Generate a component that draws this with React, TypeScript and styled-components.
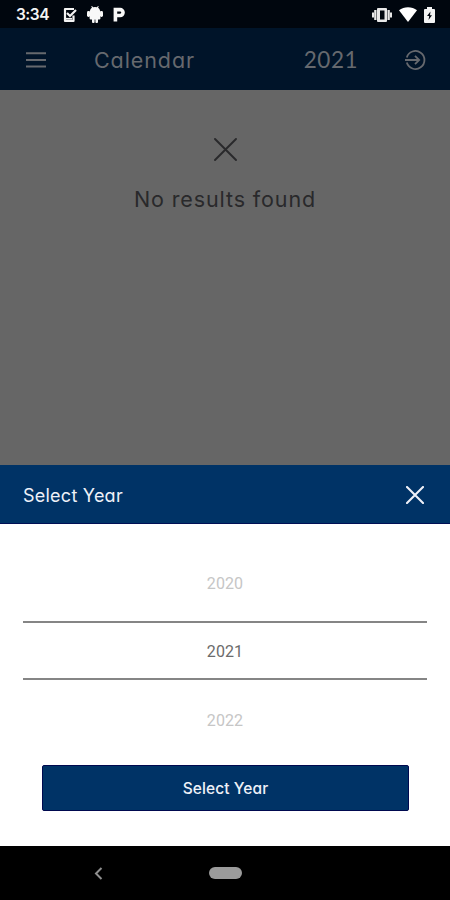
import React from "react";
import styled, { createGlobalStyle } from "styled-components";

const Global = createGlobalStyle`
  * { box-sizing: border-box; }
  body { margin: 0; background: #000; }
`;

const Screen = styled.main`
  width: 450px;
  height: 900px;
  display: flex;
  flex-direction: column;
  overflow: hidden;
  background: #666;
  font-family: Inter, "Liberation Sans", sans-serif;
  font-feature-settings: "cv11" 1;
`;

const StatusBar = styled.div`
  height: 28px;
  flex: none;
  display: flex;
  align-items: center;
  justify-content: space-between;
  padding: 1px 15px 0 16px;
  background: #00060e;
`;

const StatusGroup = styled.div<{ $gap: number }>`
  display: flex;
  align-items: center;
  gap: ${(p) => p.$gap}px;
`;

const Clock = styled.span`
  width: 37px;
  font: 600 15.5px/27px Inter, sans-serif;
  letter-spacing: -0.5px;
  white-space: nowrap;
  color: #f4f4f4;
`;

const Icon = styled.svg`
  display: block;
  flex: none;
`;

const AppBar = styled.header`
  height: 62px;
  flex: none;
  display: flex;
  align-items: center;
  padding: 1px 24px 0 26px;
  background: #001429;
  color: #66696e;
`;

const BarTitle = styled.h1`
  margin: 0 auto 0 48px;
  font-size: 21.5px;
  line-height: 30px;
  font-weight: 400;
  letter-spacing: 0.9px;
`;

const BarYear = styled.span`
  margin-right: 47px;
  font: 400 22.5px/30px Lato, sans-serif;
  letter-spacing: 0.5px;
`;

const Results = styled.section`
  flex: 1;
  display: flex;
  flex-direction: column;
  align-items: center;
  padding-top: 48px;
  color: #29292b;
`;

const EmptyText = styled.p`
  margin: 22px 0 0;
  font-size: 21.5px;
  line-height: 32px;
  font-weight: 400;
  letter-spacing: 0.88px;
`;

const Sheet = styled.section`
  height: 381px;
  flex: none;
  display: flex;
  flex-direction: column;
  background: #fff;
`;

const SheetHeader = styled.div`
  height: 59px;
  flex: none;
  display: flex;
  align-items: center;
  justify-content: space-between;
  padding: 2px 26px 0 23px;
  background: #003366;
  border-bottom: 1px solid #000f55;
  color: #eef1f8;
`;

const SheetTitle = styled.h2`
  margin: 0;
  padding-top: 2px;
  font-size: 18px;
  line-height: 26px;
  font-weight: 400;
  letter-spacing: 0.24px;
`;

const Picker = styled.div`
  margin: 31px 23px 0;
  display: flex;
  flex-direction: column;
`;

const Year = styled.div<{ $selected?: boolean }>`
  height: ${(p) => (p.$selected ? 59 : 66)}px;
  padding-top: ${(p) => (p.$selected ? 3 : 0)}px;
  display: flex;
  align-items: center;
  justify-content: center;
  font: 400 16px/20px Roboto, sans-serif;
  letter-spacing: 0.1px;
  color: ${(p) => (p.$selected ? "#6b6b6b" : "#c6c6c6")};
  border: solid #858585;
  border-width: ${(p) => (p.$selected ? "2px 0" : "0")};
  &:first-child { padding-bottom: 8px; }
  &:last-child { padding-top: 16px; }
`;

const Submit = styled.button`
  height: 46px;
  margin: 19px 41px 0 42px;
  padding: 2px 0 0;
  border: 1px solid #00094f;
  border-radius: 2px;
  background: #003366;
  color: #eef1f8;
  font: 500 15.5px/20px Inter, sans-serif;
  letter-spacing: 0.1px;
  font-feature-settings: "cv11" 1;
`;

const NavBar = styled.nav`
  height: 54px;
  flex: none;
  display: flex;
  align-items: center;
  padding-left: 93px;
  background: #000;
`;

const HomePill = styled.div`
  width: 33px;
  height: 12px;
  margin-left: 106px;
  border-radius: 6px;
  background: #9b9b9b;
`;

function Cross({ size, stroke }: { size: number; stroke: number }) {
  const far = size - 1;
  return (
    <Icon width={size} height={size} fill="none" stroke="currentColor" strokeWidth={stroke} strokeLinecap="round">
      <path d={`M1 1L${far} ${far}M${far} 1L1 ${far}`} />
    </Icon>
  );
}

export default function App() {
  return (
    <>
      <Global />
      <Screen>
        <StatusBar>
          <StatusGroup $gap={10}>
            <Clock>3:34</Clock>
            <Icon width="14" height="16" viewBox="0 0 14 16" fill="none" stroke="#f4f4f4" strokeWidth="2.2">
              <path d="M11 2H2v12h8.5V8.5" strokeLinejoin="round" />
              <path d="M4 6l3 3 6-6" />
              <path d="M3 11.8h6" strokeWidth="1.8" />
            </Icon>
            <Icon width="16" height="17" viewBox="0 0 16 17" fill="#f8f8f8">
              <path d="M3 5C3 3.5 4 2.4 5 1.8L4.2.6 5 .1l1.1 1.2a6 6 0 0 1 3.8 0L11 .1l.8.5L11 1.8c1.1.6 2 1.7 2 3.2z" />
              <rect x="2.6" y="4.5" width="10.8" height="9" rx="1" />
              <rect x="0" y="5" width="3" height="6" rx="1.4" />
              <rect x="13" y="5" width="3" height="6" rx="1.4" />
              <rect x="5" y="12" width="2.6" height="5" rx="1" />
              <rect x="8.4" y="12" width="2.6" height="5" rx="1" />
            </Icon>
            <Icon width="13" height="15" viewBox="0 0 13 15" fill="none" stroke="#f8f8f8" strokeWidth="3.6">
              <path d="M2.4 14.5V2.6h4.7a2.9 2.9 0 0 1 0 5.9H2.4" />
            </Icon>
          </StatusGroup>
          <StatusGroup $gap={7}>
            <Icon width="20" height="14" viewBox="0 0 20 14" fill="#e8e8e8">
              <path d="M6 0h8q1 0 1 1v12q0 1-1 1H6q-1 0-1-1V1q0-1 1-1zM8 2.5v9h4.5v-9z" fillRule="evenodd" />
              <path d="M2.2 2h2.3v10H2.200zM0 4.500h2v5H0zM15.500 2h2.300v10h-2.300zM18 4.500h2v5h-2z" />
            </Icon>
            <Icon width="18" height="15" viewBox="0 0 18 15" fill="#fff">
              <path d="M0 3.3C5 -.9 13 -.9 18 3.3L9 15z" />
            </Icon>
            <Icon width="11" height="16" viewBox="0 0 11 16">
              <path d="M3 0h5v2h2q1 0 1 1v12q0 1-1 1H1q-1 0-1-1V3q0-1 1-1h2z" fill="#f4f4f4" />
              <path d="M6.500 4.500L3 9h2.200L4.500 13 8 8.200H6z" fill="#00060e" />
            </Icon>
          </StatusGroup>
        </StatusBar>
        <AppBar>
          <Icon width="20" height="16" stroke="currentColor" strokeWidth="2">
            <path d="M0 1.200h20M0 8h20M0 14.500h20" />
          </Icon>
          <BarTitle>Calendar</BarTitle>
          <BarYear>2021</BarYear>
          <Icon width="21" height="20" viewBox="0 0 21 20" fill="none" stroke="currentColor" strokeWidth="1.8">
            <path d="M1.800 7.500a9 9 0 1 1 0 5" />
            <path d="M0 10h14M10 5.800l4.200 4.200-4.200 4.200" />
          </Icon>
        </AppBar>
        <Results>
          <Cross size={23} stroke={1.9} />
          <EmptyText>No results found</EmptyText>
        </Results>
        <Sheet>
          <SheetHeader>
            <SheetTitle>Select Year</SheetTitle>
            <Cross size={18} stroke={2.1} />
          </SheetHeader>
          <Picker>
            <Year>2020</Year>
            <Year $selected>2021</Year>
            <Year>2022</Year>
          </Picker>
          <Submit>Select Year</Submit>
        </Sheet>
        <NavBar>
          <Icon width="10" height="13" fill="none" stroke="#8f8f8f" strokeWidth="2">
            <path d="M8.500 1L3 6.500 8.500 12" />
          </Icon>
          <HomePill />
        </NavBar>
      </Screen>
    </>
  );
}
